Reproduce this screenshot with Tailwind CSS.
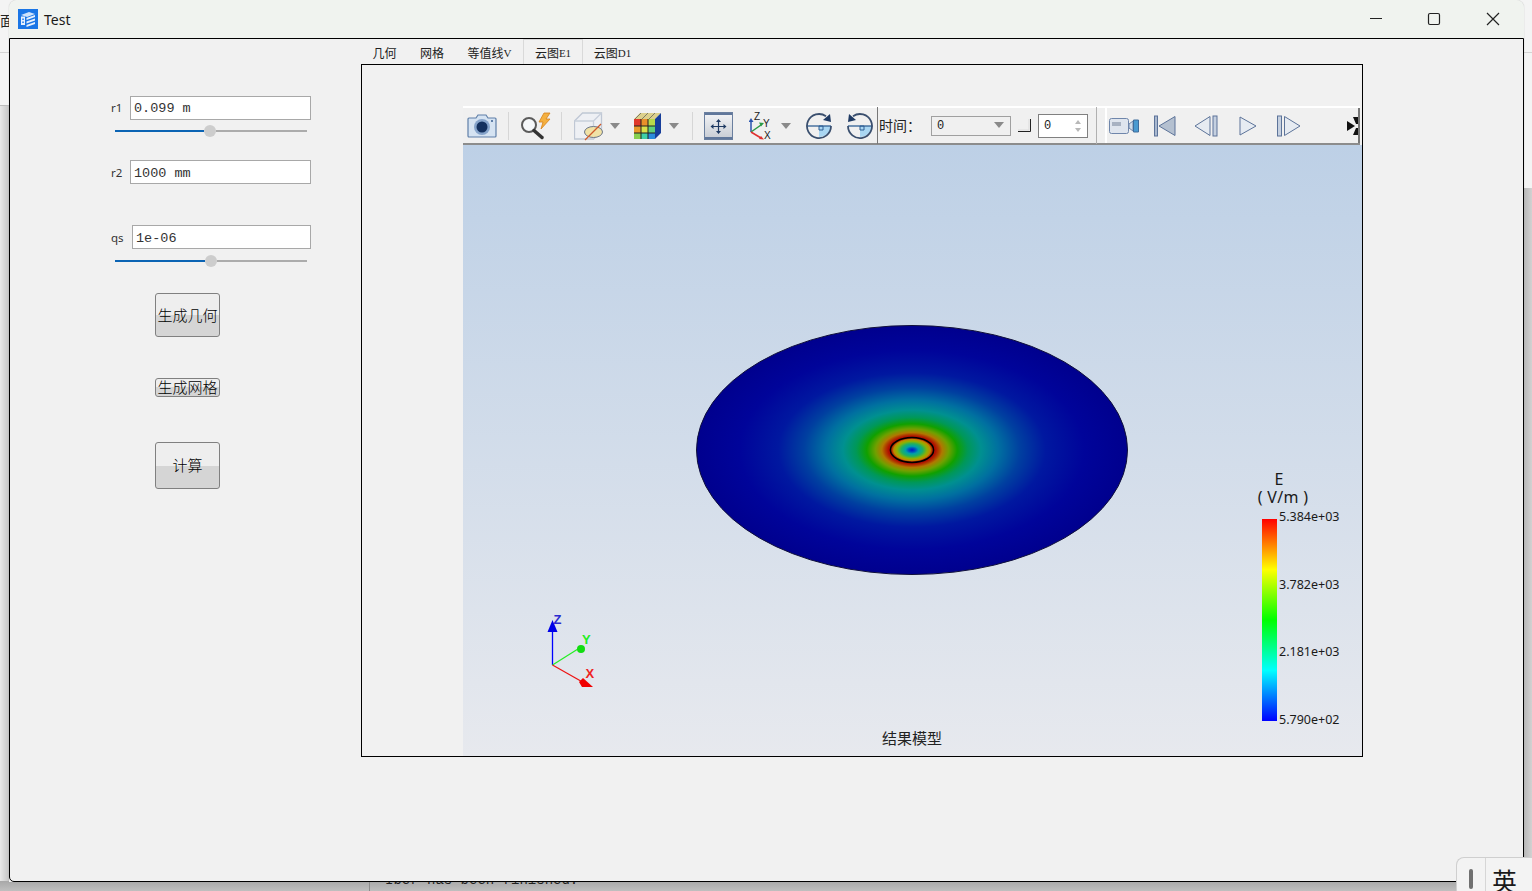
<!DOCTYPE html>
<html>
<head>
<meta charset="utf-8">
<script src="https://cdn.jsdelivr.net/npm/@tailwindcss/browser@4"></script>
</head>
<body class="overflow-hidden">
<div class="relative w-[1532px] h-[891px] overflow-hidden bg-[#f4f4f4] font-['Noto_Sans','Noto_Sans_CJK_SC',sans-serif]">
  <!-- desktop behind the window -->
  <div class="absolute left-0 top-[105px] w-[9px] h-[786px] bg-[linear-gradient(90deg,#e8e8e8,#c4c4c4)]"></div>
  <div class="absolute left-0 top-[52px] w-[9px] h-px bg-[#d4d4d4]"></div>
  <div class="absolute left-0 top-[105px] w-[9px] h-px bg-[#bdbdbd]"></div>
  <div class="absolute left-0 top-[11px] text-[14px] leading-[18px] text-[#222] font-['Noto_Sans_CJK_SC',sans-serif] w-[9px] overflow-hidden">面</div>
  <div class="absolute left-[1523px] top-[188px] w-[9px] h-[703px] bg-[linear-gradient(90deg,#b4b4b4,#d2d2d2)]"></div>
  <div class="absolute left-[1523px] top-[52px] w-[9px] h-px bg-[#d4d4d4]"></div>
  <div class="absolute left-0 top-[881px] w-[1532px] h-[10px] bg-[linear-gradient(180deg,#a8a8a8,#bfbfbf)]"></div>
  <div class="absolute left-[369px] top-[881px] w-px h-[10px] bg-[#8c8c8c]"></div>
  <div class="absolute left-[385px] top-[871px] text-[14px] leading-[18px] text-[#222] font-['Liberation_Mono',monospace]">Iber has been finished.</div>

  <!-- window -->
  <div class="absolute left-[9px] top-0 w-[1515px] h-[882px] flex flex-col rounded-t-[8px] overflow-hidden bg-[#f1f1f1] shadow-[0_0_1px_#9a9a9a]">
    <!-- title bar -->
    <div class="h-[38px] shrink-0 flex items-center bg-[#f0f3ef] pl-[9px]">
      <svg width="20" height="20" viewBox="0 0 20 20" class="shrink-0">
        <rect width="20" height="20" fill="#1a76e6"/>
        <path d="M3 6l8-3 6 2-8 3z" fill="#cfe3fb"/>
        <path d="M3 7.500h4v8.500h-4z" fill="#e6f0fd"/>
        <path d="M8.500 9l8.500-3v2l-8.500 3zM8.500 12.500l8.500-3v2l-8.500 3zM8.500 16l8.500-3v2l-8.500 3z" fill="#e6f0fd"/>
        <path d="M4.300 9.500h1.500v1.500h-1.500zM4.300 12.500h1.500v1.500h-1.500z" fill="#1a76e6"/>
      </svg>
      <span class="ml-[6px] text-[14px] text-[#1a1a1a]">Test</span>
      <div class="ml-auto flex items-center">
        <svg width="58" height="38" viewBox="0 0 58 38"><path d="M21 18.500h12" stroke="#222" stroke-width="1"/></svg>
        <svg width="58" height="38" viewBox="0 0 58 38"><rect x="21.500" y="13.500" width="11" height="11" rx="1.500" fill="none" stroke="#222" stroke-width="1.200"/></svg>
        <svg width="59" height="38" viewBox="0 0 59 38"><path d="M22 13l12 12M34 13l-12 12" stroke="#222" stroke-width="1.200"/></svg>
      </div>
    </div>
    <!-- client area -->
    <div class="flex-1 flex border border-black rounded-bl-[5px] bg-[#f1f1f1]">
      <!-- parameters -->
      <div class="w-[351px] shrink-0 pt-[57px] pl-[101px]">
        <div class="flex items-center h-[24px]">
          <span class="w-[19px] text-[11.500px] text-[#333]">r1</span>
          <div class="w-[181px] h-[24px] flex items-center bg-white border border-[#a8a8a8] pl-[3px] pt-[2px] text-[13.500px] text-[#333] font-['Liberation_Mono',monospace]">0.099 m</div>
        </div>
        <div class="ml-[4px] mt-[5px] w-[192px] h-[12px] flex items-center">
          <div class="w-[89px] h-[2px] bg-[#0b64b4]"></div>
          <div class="w-[12px] h-[12px] rounded-full bg-[#cdcdcd]"></div>
          <div class="flex-1 h-[2px] bg-[#acacac]"></div>
        </div>
        <div class="flex items-center h-[24px] mt-[23px]">
          <span class="w-[19px] pt-[2px] text-[11.500px] text-[#333]">r2</span>
          <div class="w-[181px] h-[24px] flex items-center bg-white border border-[#a8a8a8] pl-[3px] pt-[4px] text-[13.500px] text-[#333] font-['Liberation_Mono',monospace]">1000 mm</div>
        </div>
        <div class="flex items-center h-[24px] mt-[41px]">
          <span class="w-[21px] pt-[2px] text-[11.500px] text-[#333]">qs</span>
          <div class="w-[179px] h-[24px] flex items-center bg-white border border-[#a8a8a8] pl-[3px] pt-[4px] text-[13.500px] text-[#333] font-['Liberation_Mono',monospace]">1e-06</div>
        </div>
        <div class="ml-[4px] mt-[6px] w-[192px] h-[12px] flex items-center">
          <div class="w-[90px] h-[2px] bg-[#0b64b4]"></div>
          <div class="w-[12px] h-[12px] rounded-full bg-[#cdcdcd]"></div>
          <div class="flex-1 h-[2px] bg-[#acacac]"></div>
        </div>
        <div class="ml-[44px] mt-[26px] w-[65px] h-[44px] flex items-center justify-center rounded-[3px] border border-[#808080] bg-[linear-gradient(#eeeeee_50%,#d5d5d5_50%)] text-[15px] font-light text-black font-['Noto_Sans_CJK_SC',sans-serif]">生成几何</div>
        <div class="ml-[44px] mt-[41px] w-[65px] h-[19px] flex items-center justify-center rounded-[3px] border border-[#808080] bg-[linear-gradient(#eeeeee_50%,#d5d5d5_50%)] text-[15px] font-light text-black font-['Noto_Sans_CJK_SC',sans-serif]">生成网格</div>
        <div class="ml-[44px] mt-[45px] w-[65px] h-[47px] flex items-center justify-center rounded-[3px] border border-[#808080] bg-[linear-gradient(#eeeeee_50%,#d5d5d5_50%)] text-[15px] font-light text-black font-['Noto_Sans_CJK_SC',sans-serif]">计算</div>
      </div>
      <!-- tabs + results -->
      <div class="flex flex-col w-[1002px]">
        <div class="h-[25px] flex items-end text-[12px] text-[#222] font-['Noto_Sans_CJK_SC',sans-serif]">
          <div class="w-[47px] h-[24px] pt-[2px] flex items-center justify-center">几何</div>
          <div class="w-[48px] h-[24px] pt-[2px] flex items-center justify-center">网格</div>
          <div class="w-[67px] h-[24px] pt-[2px] flex items-center justify-center">等值线<span class="text-[11px] font-['Liberation_Serif',serif]">V</span></div>
          <div class="w-[60px] h-[25px] pt-[2px] flex items-center justify-center border border-b-0 border-[#d9d9d9]">云图<span class="text-[11px] font-['Liberation_Serif',serif]">E1</span></div>
          <div class="w-[59px] h-[24px] pt-[2px] flex items-center justify-center">云图<span class="text-[11px] font-['Liberation_Serif',serif]">D1</span></div>
        </div>
        <div class="w-[1002px] h-[693px] border border-black pt-[41px] pl-[101px]">
          <!-- toolbar -->
          <div class="w-[897px] h-[39px] flex items-center border-t-2 border-t-white border-b-2 border-b-[#8c8c8c] bg-[#f0f0f0]">
            <svg class="ml-[4px] shrink-0" width="30" height="28" viewBox="0 0 30 28"><path d="M2 6h7l2-3h8l2 3h7a1 1 0 0 1 1 1v17a1 1 0 0 1-1 1H2a1 1 0 0 1-1-1V7a1 1 0 0 1 1-1z" fill="#d5e3f2" stroke="#5f7fa8" stroke-width="1.200"/><circle cx="15" cy="15" r="8" fill="#86a4cb"/><circle cx="15" cy="15" r="5.500" fill="#14315f"/><rect x="24" y="8" width="2" height="2" fill="#5f7fa8"/></svg>
            <div class="ml-[11px] w-px h-[28px] bg-[#d6d6d6] shrink-0"></div>
            <svg class="ml-[11px] shrink-0" width="31" height="30" viewBox="0 0 31 30"><path d="M24 2h6l-4 6h4l-9 10 2-7h-4z" fill="#f4b040" stroke="#d5821a" stroke-width=".8"/><circle cx="9" cy="14" r="7" fill="#f6f8fa" stroke="#5b5b5b" stroke-width="2"/><path d="M14 19.500l8 7" stroke="#333" stroke-width="3.500" stroke-linecap="round"/></svg>
            <div class="ml-[10px] w-px h-[28px] bg-[#d6d6d6] shrink-0"></div>
            <svg class="ml-[12px] shrink-0" width="31" height="30" viewBox="0 0 31 30"><path d="M.5 10l8-8h19v17l-8 9H.5z" fill="#eef0f4" stroke="#bfc7d4" stroke-width="1.300"/><path d="M.5 10h19v18M19.500 10l8-8" fill="none" stroke="#c8cfda" stroke-width="1.300"/><ellipse cx="19.500" cy="21" rx="9" ry="5.500" fill="#f0e2a6" stroke="#6c7688" stroke-width="1"/><path d="M11 29l16-16" stroke="#cf5a2a" stroke-width="1.200"/></svg>
            <svg class="ml-[4px] shrink-0" width="12" height="12" viewBox="0 0 12 12"><path d="M1 3h10l-5 6z" fill="#8a8a8a"/></svg>
            <svg class="ml-[12px] shrink-0" width="29" height="28" viewBox="0 0 29 28"><path d="M1 7l6-6h21l-6 6z" fill="#dcd08c"/><path d="M8 1l-6 6M15 1l-6 6M22 1l-6 6" stroke="#555" stroke-width=".7"/><path d="M22 7l6-6v20l-6 6z" fill="#173e9a"/><rect x="1" y="7" width="7" height="7" fill="#e0392a"/><rect x="8" y="7" width="7" height="7" fill="#e8902a"/><rect x="15" y="7" width="7" height="7" fill="#b8d84a"/><rect x="1" y="14" width="7" height="7" fill="#e89a2a"/><rect x="8" y="14" width="7" height="7" fill="#d9e04a"/><rect x="15" y="14" width="7" height="7" fill="#5fd07a"/><rect x="1" y="21" width="7" height="6" fill="#88d050"/><rect x="8" y="21" width="7" height="6" fill="#3ed0a8"/><rect x="15" y="21" width="7" height="6" fill="#2a8bdc"/><path d="M8 7v20M15 7v20M1 14h21M1 21h21" stroke="#222" stroke-width="1"/></svg>
            <svg class="ml-[6px] shrink-0" width="12" height="12" viewBox="0 0 12 12"><path d="M1 3h10l-5 6z" fill="#8a8a8a"/></svg>
            <div class="ml-[12px] w-px h-[28px] bg-[#d6d6d6] shrink-0"></div>
            <svg class="ml-[11px] shrink-0" width="29" height="28" viewBox="0 0 29 28"><defs><linearGradient id="fit" x1="0" y1="0" x2="0" y2="1"><stop offset="0" stop-color="#f4f5f7"/><stop offset="1" stop-color="#c6cbd3"/></linearGradient></defs><rect x=".5" y=".5" width="28" height="27" fill="url(#fit)" stroke="#6a7f9f"/><rect x="1" y="1" width="27" height="2" fill="#60779b"/><rect x="1" y="25" width="27" height="2" fill="#60779b"/><path d="M14.500 9v11M9 14.500h11" stroke="#1f3a63" stroke-width="1.200"/><path d="M14.500 7l-2.500 3h5zM14.500 22l-2.500-3h5zM6.500 14.500l3-2.500v5zM22.500 14.500l-3-2.500v5z" fill="#1f3a63"/></svg>
            <svg class="ml-[16px] shrink-0" width="24" height="28" viewBox="0 0 24 28"><path d="M2 20V9" stroke="#2a55b0" stroke-width="1.500"/><path d="M2 6l-2.500 4h5z" fill="#2a55b0"/><path d="M2 20l10-7" stroke="#2a9a45" stroke-width="1.500"/><path d="M15 11l-5-.5 2 4z" fill="#2a9a45"/><path d="M2 20l10 6" stroke="#e03030" stroke-width="1.500"/><path d="M15 27.500l-5-.5 2-3z" fill="#e03030"/><text x="5" y="8" font-size="10" fill="#222" font-family="Liberation Sans">Z</text><text x="14" y="14.500" font-size="10" fill="#222" font-family="Liberation Sans">Y</text><text x="15" y="27" font-size="10" fill="#222" font-family="Liberation Sans">X</text></svg>
            <svg class="ml-[7px] shrink-0" width="12" height="12" viewBox="0 0 12 12"><path d="M1 3h10l-5 6z" fill="#8a8a8a"/></svg>
            <svg class="ml-[13px] shrink-0" width="28" height="28" viewBox="0 0 28 28"><path d="M14 14V25A12 12 0 0 0 26 14z" fill="#a9d6f2"/><path d="M2 14h24" stroke="#2f5f94" stroke-width="1.300"/><path d="M14 14h4v4h-4z" fill="none" stroke="#2f5f94"/><path d="M21 4.300A12 12 0 1 0 26 14" fill="none" stroke="#3a4f6e" stroke-width="1.800"/><path d="M25 2l1 8-8-2z" fill="#1f3a63"/></svg>
            <svg class="ml-[13px] shrink-0" width="28" height="28" viewBox="0 0 28 28"><path d="M14 14V25A12 12 0 0 0 26 14z" fill="#a9d6f2"/><path d="M2 14h24" stroke="#2f5f94" stroke-width="1.300"/><path d="M14 14h4v4h-4z" fill="none" stroke="#2f5f94"/><path d="M7 4.300A12 12 0 1 1 2 14" fill="none" stroke="#3a4f6e" stroke-width="1.800"/><path d="M3 2l-1 8 8-2z" fill="#1f3a63"/></svg>
            <div class="ml-[3px] w-px h-[37px] bg-[#777] shrink-0"></div>
            <span class="ml-[1px] w-[42px] shrink-0 whitespace-nowrap text-[14px] text-[#222] font-['Noto_Sans_CJK_SC',sans-serif]">时间：</span>
            <div class="ml-[10px] w-[80px] h-[20px] shrink-0 flex items-center justify-between border border-[#a0a0a0] pl-[5px] pr-[6px] text-[12px] text-[#222] font-['Liberation_Mono',monospace] bg-[#f0f0f0]">0<svg width="10" height="7" viewBox="0 0 10 7"><path d="M0 0h10l-5 6z" fill="#8a8a8a"/></svg></div>
            <svg class="ml-[7px] shrink-0" width="13" height="13" viewBox="0 0 13 13"><path d="M0 12.500h12.500V0" fill="none" stroke="#222" stroke-width="1"/><path d="M0 11h11V0" fill="none" stroke="#ddd"/></svg>
            <div class="ml-[7px] w-[50px] h-[24px] shrink-0 flex items-center justify-between border border-[#808080] bg-white pl-[5px] pr-[5px] text-[12px] text-[#222] font-['Liberation_Mono',monospace]">0<svg width="8" height="14" viewBox="0 0 8 14"><path d="M1 5l3-4 3 4zM1 9l3 4 3-4z" fill="#b8b8b8"/></svg></div>
            <div class="ml-[8px] w-px h-[37px] bg-[#b0b0b0] shrink-0"></div>
            <!-- player group -->
            <div class="ml-[8px] w-[255px] h-[35px] shrink-0 flex items-center border-l-2 border-l-white border-r-2 border-r-[#777] bg-[#f0f0f0]">
              <svg class="ml-[2px] shrink-0" width="30" height="18" viewBox="0 0 30 18"><rect x=".5" y="1.500" width="19" height="15" rx="2" fill="#dfe5ee" stroke="#6f86ab"/><rect x="3" y="5" width="9" height="4" fill="#a8b2c2"/><path d="M20 7l4-3v10l-4-3z" fill="#d0dce8" stroke="#6f86ab"/><path d="M24.500 3h5v12h-5z" fill="#4a9ad0" stroke="#3f6d9c"/></svg>
              <svg class="ml-[15px] shrink-0" width="22" height="22" viewBox="0 0 22 22"><rect x=".5" y="1" width="3" height="20" fill="#a9b8cf" stroke="#5c7399"/><path d="M21 1.500v19L5 11z" fill="#b4c0d0" stroke="#5c7399"/></svg>
              <svg class="ml-[18px] shrink-0" width="24" height="22" viewBox="0 0 24 22"><path d="M16 1.500v19L1 11z" fill="#e6ebf2" stroke="#5c7399"/><rect x="19" y="1" width="4" height="20" fill="#c5d0e0" stroke="#5c7399"/></svg>
              <svg class="ml-[21px] shrink-0" width="18" height="20" viewBox="0 0 18 20"><path d="M1 1v18l16-9z" fill="#e6ebf2" stroke="#5c7399"/></svg>
              <svg class="ml-[20px] shrink-0" width="24" height="22" viewBox="0 0 24 22"><rect x=".5" y="1" width="4" height="20" fill="#c5d0e0" stroke="#5c7399"/><path d="M7.500 1.500v19L23 11z" fill="#e6ebf2" stroke="#5c7399"/></svg>
              <svg class="ml-auto shrink-0" width="11" height="18" viewBox="0 0 11 18"><path d="M0 4l8 5-8 5z" fill="#111"/><path d="M6 0h5v7H9zM6 18h5v-7H9z" fill="#111"/></svg>
            </div>
          </div>
          <!-- 3D view -->
          <div class="relative w-[899px] h-[611px] bg-[linear-gradient(180deg,#bdd0e6,#e7e9ee)]">
            <svg class="absolute left-[233px] top-[180px]" width="432" height="250" viewBox="0 0 432 250">
              <defs>
                <radialGradient id="field" cx="50%" cy="50%" r="50%">
                  <stop offset="0%" stop-color="#0018c8"/>
                  <stop offset="1.500%" stop-color="#0050c0"/>
                  <stop offset="3%" stop-color="#00a0a8"/>
                  <stop offset="5%" stop-color="#20b060"/>
                  <stop offset="7%" stop-color="#90b000"/>
                  <stop offset="8.500%" stop-color="#c08800"/>
                  <stop offset="9.300%" stop-color="#b03000"/>
                  <stop offset="10%" stop-color="#a80800"/>
                  <stop offset="11%" stop-color="#b01000"/>
                  <stop offset="12.500%" stop-color="#b04000"/>
                  <stop offset="14%" stop-color="#b07800"/>
                  <stop offset="17%" stop-color="#70a000"/>
                  <stop offset="21%" stop-color="#10a000"/>
                  <stop offset="26%" stop-color="#009858"/>
                  <stop offset="32%" stop-color="#009090"/>
                  <stop offset="40%" stop-color="#0070a0"/>
                  <stop offset="50%" stop-color="#0040a0"/>
                  <stop offset="62%" stop-color="#0018a0"/>
                  <stop offset="80%" stop-color="#00049a"/>
                  <stop offset="100%" stop-color="#00008e"/>
                </radialGradient>
              </defs>
              <ellipse cx="216" cy="125" rx="215.500" ry="124.500" fill="url(#field)" stroke="#10103a" stroke-width="1"/>
              <ellipse cx="216" cy="125" rx="21.600" ry="12.400" fill="none" stroke="#000" stroke-width="1.500"/>
            </svg>
            <svg class="absolute left-[77px] top-[465px]" width="65" height="85" viewBox="0 0 65 85">
              <path d="M12.500 55V20" stroke="#0000ff" stroke-width="1.300"/>
              <path d="M12.500 10l-5 12h10z" fill="#0000e8"/>
              <text x="13.500" y="14" font-size="13" font-weight="700" fill="#2a2ad0" font-family="Liberation Sans">Z</text>
              <path d="M12.500 55l27-17" stroke="#22ee22" stroke-width="1.200"/>
              <circle cx="41" cy="39" r="4" fill="#11dd11"/>
              <text x="42" y="34" font-size="13" font-weight="700" fill="#22ee22" font-family="Liberation Sans">Y</text>
              <path d="M12.500 55l30 17" stroke="#ee1111" stroke-width="1.200"/>
              <path d="M39 72l4-4 10 9h-11z" fill="#f00000"/>
              <text x="45.500" y="68" font-size="13" font-weight="700" fill="#ee2222" font-family="Liberation Sans">X</text>
            </svg>
            <div class="absolute left-[771px] top-[326px] w-[90px] text-center text-[16px] leading-[17px] text-[#1a1a1a]">E</div>
            <div class="absolute left-[775px] top-[344px] w-[90px] text-center text-[16px] leading-[17px] tracking-[0.3px] whitespace-pre text-[#1a1a1a]">( V/m )</div>
            <div class="absolute left-[799px] top-[374px] w-[15px] h-[202px] bg-[linear-gradient(180deg,#ff0000,#ffff00_25%,#00ff00_50%,#00ffff_75%,#0000ff)]"></div>
            <div class="absolute left-[816px] top-[363px] h-[220px] flex flex-col justify-between text-[12.500px] leading-[17px] text-[#1a1a1a]">
              <span>5.384e+03</span>
              <span>3.782e+03</span>
              <span>2.181e+03</span>
              <span>5.790e+02</span>
            </div>
            <div class="absolute left-[419px] top-[583px] text-[15px] leading-[20px] text-[#222] font-['Noto_Sans_CJK_SC',sans-serif]">结果模型</div>
          </div>
        </div>
      </div>
    </div>
  </div>

  <!-- language indicator -->
  <div class="absolute left-[1456px] top-[857px] w-[76px] h-[34px] flex rounded-tl-[8px] border-t border-l border-[#cfcfcf] bg-[#f3f3f3]">
    <div class="w-[29px] pt-[11px] pl-[12px] border-r border-[#d6d6d6]"><div class="w-[4px] h-[20px] rounded-full bg-[#707070]"></div></div>
    <div class="flex-1 pl-[6px] text-[25px] leading-[44px] text-[#1a1a1a] font-['Noto_Sans_CJK_SC',sans-serif]">英</div>
  </div>
</div>
</body>
</html>
